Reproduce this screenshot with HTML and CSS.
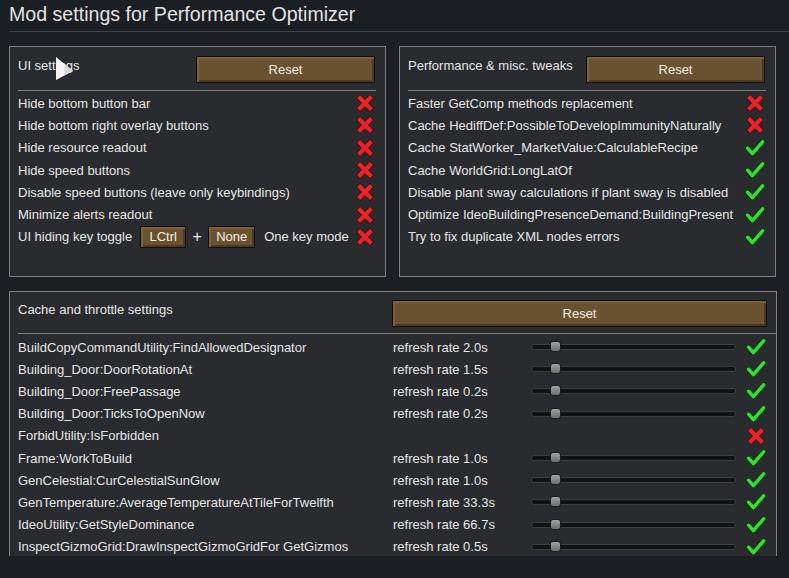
FILE: index.html
```html
<!DOCTYPE html>
<html>
<head>
<meta charset="utf-8">
<title>Mod settings for Performance Optimizer</title>
<link rel="stylesheet" href="styles.css">
</head>
<body>
<svg class="defs" width="0" height="0" aria-hidden="true">
  <symbol id="no" viewBox="0 0 20 20">
    <path d="M3 3L17 17M17 3L3 17" fill="none" stroke="#4b0d0d" stroke-width="6.2"/>
    <path d="M3.6 3.6L16.4 16.4M16.4 3.6L3.6 16.4" fill="none" stroke="#e4262a" stroke-width="4.2"/>
  </symbol>
  <symbol id="yes" viewBox="0 0 20 20">
    <path d="M2.6 10.2L7.4 15.6L17.6 3.8" fill="none" stroke="#0f3f0f" stroke-width="5.6" stroke-linejoin="round" stroke-linecap="round"/>
    <path d="M2.6 10.2L7.4 15.6L17.6 3.8" fill="none" stroke="#38dc38" stroke-width="3.4" stroke-linejoin="round" stroke-linecap="round"/>
  </symbol>
</svg>
<div class="window">
  <h1 class="title">Mod settings for Performance Optimizer</h1>

  <div class="top-row">
    <section class="panel">
      <div class="panel-head">
        <span class="panel-label">UI settings</span>
        <button class="btn btn-reset">Reset</button>
      </div>
      <div class="sep"></div>
      <div class="row"><span>Hide bottom button bar</span><svg class="icon"><use href="#no"/></svg></div>
      <div class="row"><span>Hide bottom right overlay buttons</span><svg class="icon"><use href="#no"/></svg></div>
      <div class="row"><span>Hide resource readout</span><svg class="icon"><use href="#no"/></svg></div>
      <div class="row"><span>Hide speed buttons</span><svg class="icon"><use href="#no"/></svg></div>
      <div class="row"><span>Disable speed buttons (leave only keybindings)</span><svg class="icon"><use href="#no"/></svg></div>
      <div class="row"><span>Minimize alerts readout</span><svg class="icon"><use href="#no"/></svg></div>
      <div class="row">
        <span>UI hiding key toggle</span>
        <button class="btn btn-key">LCtrl</button>
        <span class="plus">+</span>
        <button class="btn btn-key btn-key-wide">None</button>
        <span class="mode-label">One key mode</span>
        <svg class="icon"><use href="#no"/></svg>
      </div>
    </section>

    <section class="panel">
      <div class="panel-head">
        <span class="panel-label">Performance &amp; misc. tweaks</span>
        <button class="btn btn-reset">Reset</button>
      </div>
      <div class="sep"></div>
      <div class="row"><span>Faster GetComp methods replacement</span><svg class="icon"><use href="#no"/></svg></div>
      <div class="row"><span>Cache HediffDef:PossibleToDevelopImmunityNaturally</span><svg class="icon"><use href="#no"/></svg></div>
      <div class="row"><span>Cache StatWorker_MarketValue:CalculableRecipe</span><svg class="icon"><use href="#yes"/></svg></div>
      <div class="row"><span>Cache WorldGrid:LongLatOf</span><svg class="icon"><use href="#yes"/></svg></div>
      <div class="row"><span>Disable plant sway calculations if plant sway is disabled</span><svg class="icon"><use href="#yes"/></svg></div>
      <div class="row"><span>Optimize IdeoBuildingPresenceDemand:BuildingPresent</span><svg class="icon"><use href="#yes"/></svg></div>
      <div class="row"><span>Try to fix duplicate XML nodes errors</span><svg class="icon"><use href="#yes"/></svg></div>
    </section>
  </div>

  <div class="scroll">
    <section class="panel panel-wide">
      <div class="panel-head">
        <span class="panel-label">Cache and throttle settings</span>
        <button class="btn btn-reset btn-reset-wide">Reset</button>
      </div>
      <div class="sep sep-full"></div>
      <div class="grid-row"><span>BuildCopyCommandUtility:FindAllowedDesignator</span><span>refresh rate 2.0s</span><div class="track"><div class="thumb"></div></div><svg class="icon"><use href="#yes"/></svg></div>
      <div class="grid-row"><span>Building_Door:DoorRotationAt</span><span>refresh rate 1.5s</span><div class="track"><div class="thumb"></div></div><svg class="icon"><use href="#yes"/></svg></div>
      <div class="grid-row"><span>Building_Door:FreePassage</span><span>refresh rate 0.2s</span><div class="track"><div class="thumb"></div></div><svg class="icon"><use href="#yes"/></svg></div>
      <div class="grid-row"><span>Building_Door:TicksToOpenNow</span><span>refresh rate 0.2s</span><div class="track"><div class="thumb"></div></div><svg class="icon"><use href="#yes"/></svg></div>
      <div class="grid-row"><span>ForbidUtility:IsForbidden</span><span></span><span></span><svg class="icon"><use href="#no"/></svg></div>
      <div class="grid-row"><span>Frame:WorkToBuild</span><span>refresh rate 1.0s</span><div class="track"><div class="thumb"></div></div><svg class="icon"><use href="#yes"/></svg></div>
      <div class="grid-row"><span>GenCelestial:CurCelestialSunGlow</span><span>refresh rate 1.0s</span><div class="track"><div class="thumb"></div></div><svg class="icon"><use href="#yes"/></svg></div>
      <div class="grid-row"><span>GenTemperature:AverageTemperatureAtTileForTwelfth</span><span>refresh rate 33.3s</span><div class="track"><div class="thumb"></div></div><svg class="icon"><use href="#yes"/></svg></div>
      <div class="grid-row"><span>IdeoUtility:GetStyleDominance</span><span>refresh rate 66.7s</span><div class="track"><div class="thumb"></div></div><svg class="icon"><use href="#yes"/></svg></div>
      <div class="grid-row"><span>InspectGizmoGrid:DrawInspectGizmoGridFor GetGizmos</span><span>refresh rate 0.5s</span><div class="track"><div class="thumb"></div></div><svg class="icon"><use href="#yes"/></svg></div>
    </section>
  </div>

  <svg class="cursor" width="18" height="24" viewBox="0 0 18 24" aria-hidden="true">
    <polygon points="0,0 17,14 0,23" fill="#f4f4f4"/>
    <polygon points="9,7 17,14 8,18" fill="#d8d8d8"/>
  </svg>
</div>
</body>
</html>
```

FILE: styles.css
```css
* { box-sizing: border-box; }

html, body {
  margin: 0;
  padding: 0;
  height: 100%;
  overflow: hidden;
  background: #1b1e22;
}

body {
  font-family: "Liberation Sans", Arial, sans-serif;
  font-size: 13px;
  color: #e6e6e6;
}

.defs { position: absolute; width: 0; height: 0; overflow: hidden; }

.window {
  position: relative;
  padding-left: 9px;
  height: 578px;
}

.title {
  margin: 0;
  padding-top: 2px;
  font-size: 19.6px;
  font-weight: normal;
  line-height: 24px;
  color: #e2e2e2;
  height: 32px;
  border-bottom: 1px solid #3b474e;
}

.top-row {
  display: flex;
  gap: 13px;
  margin-top: 14px;
}

.panel {
  width: 377px;
  height: 231px;
  background: #2a2b2e;
  border: 1px solid #7c7e81;
  padding: 9px 9px 0 8px;
}

.panel-wide {
  width: 768px;
  height: 290px;
  padding: 8px 10px 0 8px;
  border-bottom: none;
}

.panel-head {
  display: flex;
  justify-content: space-between;
  align-items: flex-start;
  height: 27px;
}

.panel-label {
  padding-top: 2px;
  line-height: 16px;
}

.btn {
  font-family: "Liberation Sans", Arial, sans-serif;
  font-size: 13px;
  color: #f3eee2;
  background: #6a5230;
  border: 1px solid #0e0d0b;
  box-shadow: inset 2px 2px 0 #7b623c, inset -2px -2px 0 #4c3b21;
  padding: 0;
  margin: 0;
  cursor: default;
}

.btn-reset {
  width: 179px;
  height: 27px;
  margin-right: 1px;
}

.btn-reset-wide {
  width: 375px;
  margin-right: -1px;
}

.sep {
  height: 1px;
  background: #7f7f7f;
  margin-top: 7px;
  margin-bottom: 1px;
}

.sep-full {
  margin-top: 6px;
  margin-bottom: 2px;
  margin-right: -10px;
}

.row {
  display: flex;
  align-items: center;
  height: 22.3px;
  white-space: nowrap;
}

.icon {
  width: 20px;
  height: 20px;
  flex: none;
  margin-left: auto;
  margin-right: 1px;
}

.btn-key {
  width: 46px;
  height: 22px;
  margin-left: 8px;
}

.btn-key-wide {
  width: 47px;
  margin-left: 0;
}

.plus {
  width: 22px;
  text-align: center;
  font-size: 16px;
}

.mode-label {
  margin-left: 9px;
}

.scroll {
  margin-top: 14px;
  height: 265px;
  overflow: hidden;
}

.grid-row {
  display: grid;
  grid-template-columns: 375px 138px 215px 20px;
  align-items: center;
  height: 22.2px;
  white-space: nowrap;
}

.grid-row .icon {
  margin: 0;
}

.track {
  position: relative;
  width: 205px;
  height: 6px;
  border-radius: 3px;
  background: #111213;
  border: 1px solid #3d3e40;
}

.thumb {
  position: absolute;
  left: 18px;
  top: -4px;
  width: 11px;
  height: 11px;
  border-radius: 3px;
  border: 1px solid #1d1d1d;
  background: linear-gradient(#a2a2a2, #6c6c6c);
}

.cursor {
  position: absolute;
  left: 56px;
  top: 57px;
}
```
